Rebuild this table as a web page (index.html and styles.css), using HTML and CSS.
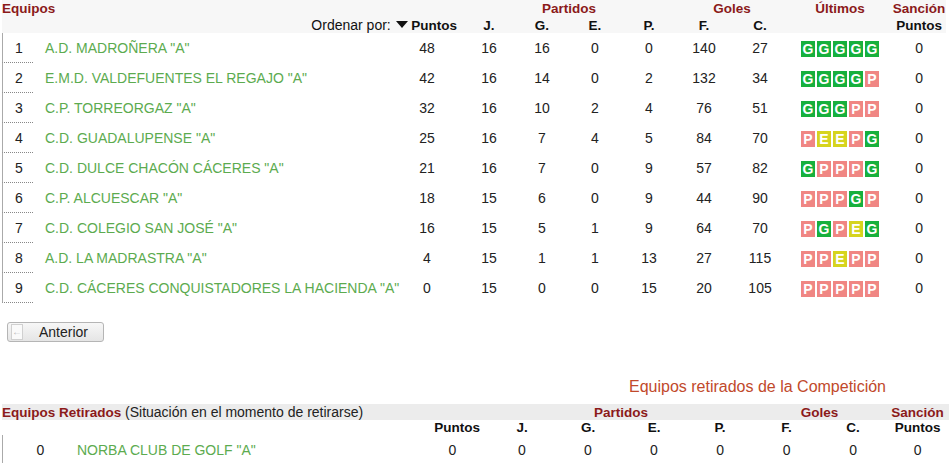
FILE: index.html
```html
<!DOCTYPE html>
<html>
<head>
  <meta charset="UTF-8">
  <title>Clasificación</title>
  <link rel="stylesheet" href="styles.css">
</head>
<body>
  <table class="standings">
    <colgroup>
      <col style="width:31px"><col style="width:367px"><col style="width:62px">
      <col style="width:54px"><col style="width:52px"><col style="width:54px"><col style="width:54px">
      <col style="width:56px"><col style="width:56px"><col style="width:104px"><col style="width:54px">
    </colgroup>
    <thead>
      <tr class="group-row">
        <th colspan="3" class="left red">Equipos</th>
        <th colspan="4" class="red">Partidos</th>
        <th colspan="2" class="red">Goles</th>
        <th class="red">Últimos</th>
        <th class="red">Sanción</th>
      </tr>
      <tr class="col-row">
        <th colspan="3" class="sort-cell"><span class="sort-label">Ordenar por:</span> <span class="sort-arrow"></span> Puntos</th>
        <th>J.</th><th>G.</th><th>E.</th><th>P.</th><th>F.</th><th>C.</th><th></th><th>Puntos</th>
      </tr>
    </thead>
    <tbody>
      <tr><td class="rank">1</td><td class="team">A.D. MADROÑERA "A"</td><td class="pts">48</td><td>16</td><td>16</td><td>0</td><td>0</td><td>140</td><td>27</td>
        <td><span class="res g">G</span><span class="res g">G</span><span class="res g">G</span><span class="res g">G</span><span class="res g">G</span></td><td>0</td></tr>
      <tr><td class="rank">2</td><td class="team">E.M.D. VALDEFUENTES EL REGAJO "A"</td><td class="pts">42</td><td>16</td><td>14</td><td>0</td><td>2</td><td>132</td><td>34</td>
        <td><span class="res g">G</span><span class="res g">G</span><span class="res g">G</span><span class="res g">G</span><span class="res p">P</span></td><td>0</td></tr>
      <tr><td class="rank">3</td><td class="team">C.P. TORREORGAZ "A"</td><td class="pts">32</td><td>16</td><td>10</td><td>2</td><td>4</td><td>76</td><td>51</td>
        <td><span class="res g">G</span><span class="res g">G</span><span class="res g">G</span><span class="res p">P</span><span class="res p">P</span></td><td>0</td></tr>
      <tr><td class="rank">4</td><td class="team">C.D. GUADALUPENSE "A"</td><td class="pts">25</td><td>16</td><td>7</td><td>4</td><td>5</td><td>84</td><td>70</td>
        <td><span class="res p">P</span><span class="res e">E</span><span class="res e">E</span><span class="res p">P</span><span class="res g">G</span></td><td>0</td></tr>
      <tr><td class="rank">5</td><td class="team">C.D. DULCE CHACÓN CÁCERES "A"</td><td class="pts">21</td><td>16</td><td>7</td><td>0</td><td>9</td><td>57</td><td>82</td>
        <td><span class="res g">G</span><span class="res p">P</span><span class="res p">P</span><span class="res p">P</span><span class="res g">G</span></td><td>0</td></tr>
      <tr><td class="rank">6</td><td class="team">C.P. ALCUESCAR "A"</td><td class="pts">18</td><td>15</td><td>6</td><td>0</td><td>9</td><td>44</td><td>90</td>
        <td><span class="res p">P</span><span class="res p">P</span><span class="res p">P</span><span class="res g">G</span><span class="res p">P</span></td><td>0</td></tr>
      <tr><td class="rank">7</td><td class="team">C.D. COLEGIO SAN JOSÉ "A"</td><td class="pts">16</td><td>15</td><td>5</td><td>1</td><td>9</td><td>64</td><td>70</td>
        <td><span class="res p">P</span><span class="res g">G</span><span class="res p">P</span><span class="res e">E</span><span class="res g">G</span></td><td>0</td></tr>
      <tr><td class="rank">8</td><td class="team">A.D. LA MADRASTRA "A"</td><td class="pts">4</td><td>15</td><td>1</td><td>1</td><td>13</td><td>27</td><td>115</td>
        <td><span class="res p">P</span><span class="res p">P</span><span class="res e">E</span><span class="res p">P</span><span class="res p">P</span></td><td>0</td></tr>
      <tr><td class="rank">9</td><td class="team">C.D. CÁCERES CONQUISTADORES LA HACIENDA "A"</td><td class="pts">0</td><td>15</td><td>0</td><td>0</td><td>15</td><td>20</td><td>105</td>
        <td><span class="res p">P</span><span class="res p">P</span><span class="res p">P</span><span class="res p">P</span><span class="res p">P</span></td><td>0</td></tr>
    </tbody>
  </table>

  <div class="pager">
    <button class="pager-btn"><span class="pager-icon">&#8592;</span>Anterior</button>
  </div>

  <h2 class="section-title">Equipos retirados de la Competición</h2>

  <table class="standings retired">
    <colgroup>
      <col style="width:14px"><col style="width:49px"><col style="width:359px"><col style="width:65px">
      <col style="width:66px"><col style="width:66px"><col style="width:66px"><col style="width:66px">
      <col style="width:67px"><col style="width:66px"><col style="width:63px">
    </colgroup>
    <thead>
      <tr class="group-row">
        <th colspan="4" class="left"><span class="red">Equipos Retirados</span> <span class="note">(Situación en el momento de retirarse)</span></th>
        <th colspan="4" class="red">Partidos</th>
        <th colspan="2" class="red">Goles</th>
        <th class="red">Sanción</th>
      </tr>
      <tr class="col-row">
        <th colspan="4" class="sort-cell">Puntos</th>
        <th>J.</th><th>G.</th><th>E.</th><th>P.</th><th>F.</th><th>C.</th><th>Puntos</th>
      </tr>
    </thead>
    <tbody>
      <tr><td class="rank mark"></td><td>0</td><td class="team">NORBA CLUB DE GOLF "A"</td><td class="pts">0</td><td>0</td><td>0</td><td>0</td><td>0</td><td>0</td><td>0</td><td>0</td></tr>
    </tbody>
  </table>
</body>
</html>
```

FILE: styles.css
```css
body {
  margin: 0;
  font-family: "Liberation Sans", Arial, sans-serif;
  font-size: 14px;
  color: #222;
  background: #fff;
}

.standings {
  width: 944px;
  margin-left: 2px;
  border-collapse: separate;
  border-spacing: 0;
  table-layout: fixed;
}
.standings th,
.standings td {
  padding: 0;
  text-align: center;
  vertical-align: middle;
  white-space: nowrap;
}
.standings td {
  font-size: 14px;
}
.standings th {
  font-size: 13.5px;
  font-weight: bold;
  color: #111;
}
.standings .red {
  color: #8b1a1a;
  font-weight: bold;
}
.standings .left {
  text-align: left;
}

.group-row th {
  height: 17px;
  background: #f7f7f7;
}
.col-row th {
  height: 16px;
  background: #f7f7f7;
}
.sort-cell {
  text-align: right !important;
  padding-right: 5px !important;
}
.sort-label {
  font-weight: normal;
  font-size: 14px;
}
.sort-arrow {
  display: inline-block;
  width: 0;
  height: 0;
  border-left: 6px solid transparent;
  border-right: 6px solid transparent;
  border-top: 7px solid #111;
  vertical-align: 2px;
  margin: 0 0 0 1px;
}

.standings tbody tr {
  height: 30px;
}
.standings .rank {
  border-left: 1px solid #aaa;
  border-bottom: 1px dotted #888;
  padding-left: 2px;
}
.standings .team {
  text-align: left;
  padding-left: 12px;
  color: #5cab4f;
}
.standings .pts {
  padding-right: 8px;
}

.res {
  display: inline-block;
  width: 14px;
  height: 16px;
  line-height: 16px;
  margin: 0 1px;
  font-weight: bold;
  font-size: 14px;
  color: #fff;
  text-align: center;
  vertical-align: middle;
}
.res.g { background: #17b03d; }
.res.p { background: #f08683; }
.res.e { background: #d6d41e; }

.pager {
  padding: 19px 0 0 7px;
}
.pager-btn {
  display: inline-flex;
  align-items: center;
  width: 97px;
  height: 20px;
  padding: 0 0 0 3px;
  border: 1px solid #b5b5b5;
  border-radius: 3px;
  background: linear-gradient(#f7f7f7, #e5e5e5);
  font-family: "Liberation Sans", Arial, sans-serif;
  font-size: 14px;
  color: #222;
  cursor: pointer;
}
.pager-icon {
  display: inline-block;
  width: 10px;
  height: 14px;
  line-height: 14px;
  margin-right: 16px;
  border: 1px solid #d0d0d0;
  background: #fafafa;
  color: #bbb;
  font-size: 10px;
  text-align: center;
}

.section-title {
  margin: 36px 63px 8px 0;
  text-align: right;
  font-size: 16px;
  font-weight: normal;
  line-height: 18px;
  color: #c1492b;
}

.retired .group-row th {
  height: 15px;
  background: #ececec;
}
.retired .col-row th {
  height: 15px;
  background: #fff;
}
.retired .note {
  font-weight: normal;
  font-size: 14px;
  color: #222;
}
.retired .sort-cell {
  padding-right: 9px !important;
}
.retired .mark {
  padding: 0;
}
```
